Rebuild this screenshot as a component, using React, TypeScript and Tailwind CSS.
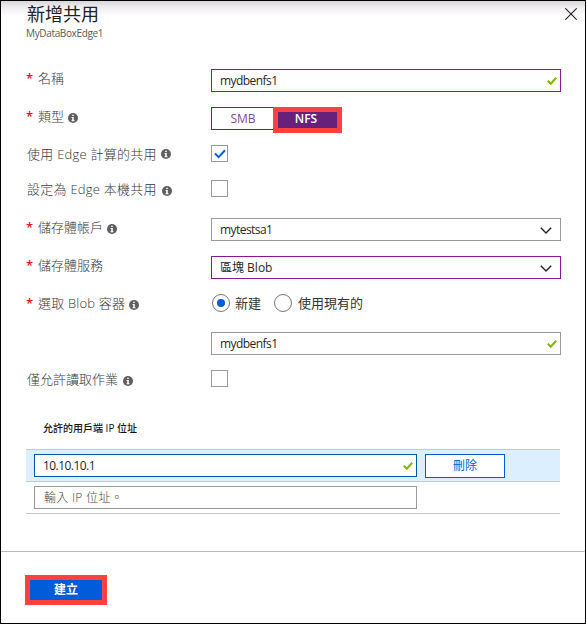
import type { ReactNode } from "react";

function Info({ className = "" }: { className?: string }) {
  return (
    <svg viewBox="0 0 10 10" className={`h-[10px] w-[10px] shrink-0 ${className}`}>
      <circle cx="5" cy="5" r="5" fill="#5f5f5f" />
      <path d="M4.2 1.7h1.6v1.4H4.2zM3.5 4h2.3v3.2h.7v1h-3v-1h.7V5h-.7z" fill="#fff" />
    </svg>
  );
}

function Check() {
  return (
    <svg viewBox="0 0 10 8" className="h-[8px] w-[10px] shrink-0">
      <path d="M.8 3.8 3.8 6.7 9.2.8" fill="none" stroke="#7fba00" strokeWidth="2.1" />
    </svg>
  );
}

function Chevron() {
  return (
    <svg viewBox="0 0 12 7" className="mt-[2px] mr-[5px] h-[7px] w-[12px] shrink-0">
      <path d="M.8.8 6 6 11.2.8" fill="none" stroke="#222" strokeWidth="1.4" />
    </svg>
  );
}

function Row({ label, required, info, infoClass = "", className = "h-[38px]", labelClass = "", children }: {
  label: string; required?: boolean; info?: boolean; infoClass?: string; className?: string; labelClass?: string; children: ReactNode;
}) {
  return (
    <div className={`flex items-start ${className}`}>
      <div className="flex h-[18px] w-[185px] shrink-0 items-center pl-px text-[13px] leading-[18px] font-light whitespace-nowrap text-[#383838]">
        {required && <span className="-ml-px h-[18px] w-[12px] shrink-0 text-[13px] font-semibold text-[#e81123]">*</span>}
        <span className={labelClass}>{label}</span>
        {info && <Info className={infoClass} />}
      </div>
      {children}
    </div>
  );
}

function Field({ text, border, textClass = "", className = "w-[350px]", icon }: {
  text: string; border: string; textClass?: string; className?: string; icon?: ReactNode;
}) {
  return (
    <div className={`flex h-[23px] items-center justify-between border bg-white pr-[3px] pl-[8px] text-[12px] leading-[16px] whitespace-nowrap text-[#262626] ${border} ${className}`}>
      <span className={textClass}>{text}</span>
      {icon}
    </div>
  );
}

function Box({ checked }: { checked?: boolean }) {
  return (
    <div className="flex h-[17px] w-[17px] items-center justify-center border border-[#999]">
      {checked && (
        <svg viewBox="0 0 12 10" className="h-[10px] w-[12px]">
          <path d="M1 4.5 4.6 8.1 11 1.2" fill="none" stroke="#015cda" strokeWidth="2" />
        </svg>
      )}
    </div>
  );
}

export default function App() {
  return (
    <div className="h-[624px] w-[586px] overflow-hidden border border-black bg-white font-['Open_Sans','Noto_Sans_CJK_TC',sans-serif]">
      <header className="flex h-[68px] justify-between bg-[linear-gradient(#d9d5da_0px,#eeecef_6px,#fff_15px)] pr-[8px] pl-[25px]">
        <div>
          <h1 className="pl-px text-[18px] leading-[26px] text-[#222]">新增共用</h1>
          <p className="text-[10px] leading-[12px] tracking-[-0.35px] text-[#595959]">MyDataBoxEdge1</p>
        </div>
        <svg viewBox="0 0 12 12" className="mt-[7px] h-[12px] w-[12px]">
          <path d="M.3.3 11.7 11.7M11.7.3.3 11.7" stroke="#222" strokeWidth="1.1" />
        </svg>
      </header>
      <main className="h-[350px] pl-[25px]">
        <Row label="名稱" required>
          <Field text="mydbenfs1" textClass="tracking-[-0.55px]" border="border-[#881798]" icon={<Check />} />
        </Row>
        <Row label="類型" required info infoClass="ml-[4px] mt-[3px]">
          <div className="flex text-[12px]">
            <div className="flex h-[23px] w-[62px] items-center justify-center border border-r-0 border-[#68217a] pl-px text-[#804998]">SMB</div>
            <div className="flex h-[26px] w-[69px] items-center justify-center border-[5px] border-[#ff4040] bg-[#68217a] pr-[3px] pb-[3px] font-semibold text-white">NFS</div>
          </div>
        </Row>
        <Row label="使用 Edge 計算的共用" labelClass="tracking-[0.25px]" info infoClass="ml-[4px]" className="h-[35px]"><Box checked /></Row>
        <Row label="設定為 Edge 本機共用" labelClass="tracking-[0.25px]" info infoClass="ml-[5px] mt-[3px]"><Box /></Row>
        <Row label="儲存體帳戶" required info infoClass="ml-[4px] mt-[3px]">
          <Field text="mytestsa1" textClass="tracking-[-0.55px]" border="border-[#999]" icon={<Chevron />} />
        </Row>
        <Row label="儲存體服務" required>
          <Field text="區塊 Blob" border="border-[#881798]" icon={<Chevron />} />
        </Row>
        <Row label="選取 Blob 容器" labelClass="tracking-[0.2px]" required info infoClass="ml-[4px] mt-[3px]">
          <div className="flex h-[18px] items-center text-[13px] leading-[18px] text-[#333]">
            <span className="ml-px flex h-[18px] w-[18px] items-center justify-center rounded-full border border-[#777]">
              <span className="h-[8px] w-[8px] rounded-full bg-[#015cda]" />
            </span>
            <span className="ml-[5px] w-[39px]">新建</span>
            <span className="h-[18px] w-[18px] rounded-full border border-[#777]" />
            <span className="ml-[6px]">使用現有的</span>
          </div>
        </Row>
        <div className="h-[38px] pl-[185px]"><Field text="mydbenfs1" textClass="tracking-[-0.55px]" border="border-[#999]" icon={<Check />} /></div>
        <Row label="僅允許讀取作業" info infoClass="ml-[5px] mt-[3px]"><Box /></Row>
      </main>
      <section className="h-[132px] pr-[24px] pl-[25px]">
        <div className="h-[30px] pl-[17px] text-[10px] leading-[18px] font-medium text-[#111]">允許的用戶端 IP 位址</div>
        <div className="flex h-[33px] w-[534px] items-start gap-[8px] border-y border-[#c8c8c8] bg-[#dcefff] pt-[4px] pl-[8px]">
          <Field text="10.10.10.1" textClass="tracking-[-0.55px]" border="border-[#0058ad]" className="w-[383px]" icon={<Check />} />
          <button className="h-[24px] w-[80px] border border-[#015cda] bg-white text-[12px] leading-[22px] text-[#015cda]">刪除</button>
        </div>
        <div className="flex h-[32px] w-[534px] items-start border-b border-[#c8c8c8] pt-[4px] pl-[8px]">
          <Field text="輸入 IP 位址。" border="border-[#999]" className="w-[383px]" textClass="tracking-[0.3px] pl-px font-light text-[#444]" />
        </div>
      </section>
      <footer className="border-t border-[#bababa] pt-[23px] pl-[24px]">
        <button className="block h-[30px] w-[82px] border-[5px] border-[#ff4040] bg-[#015cda] text-[12px] leading-[18px] font-bold text-white">建立</button>
      </footer>
    </div>
  );
}
